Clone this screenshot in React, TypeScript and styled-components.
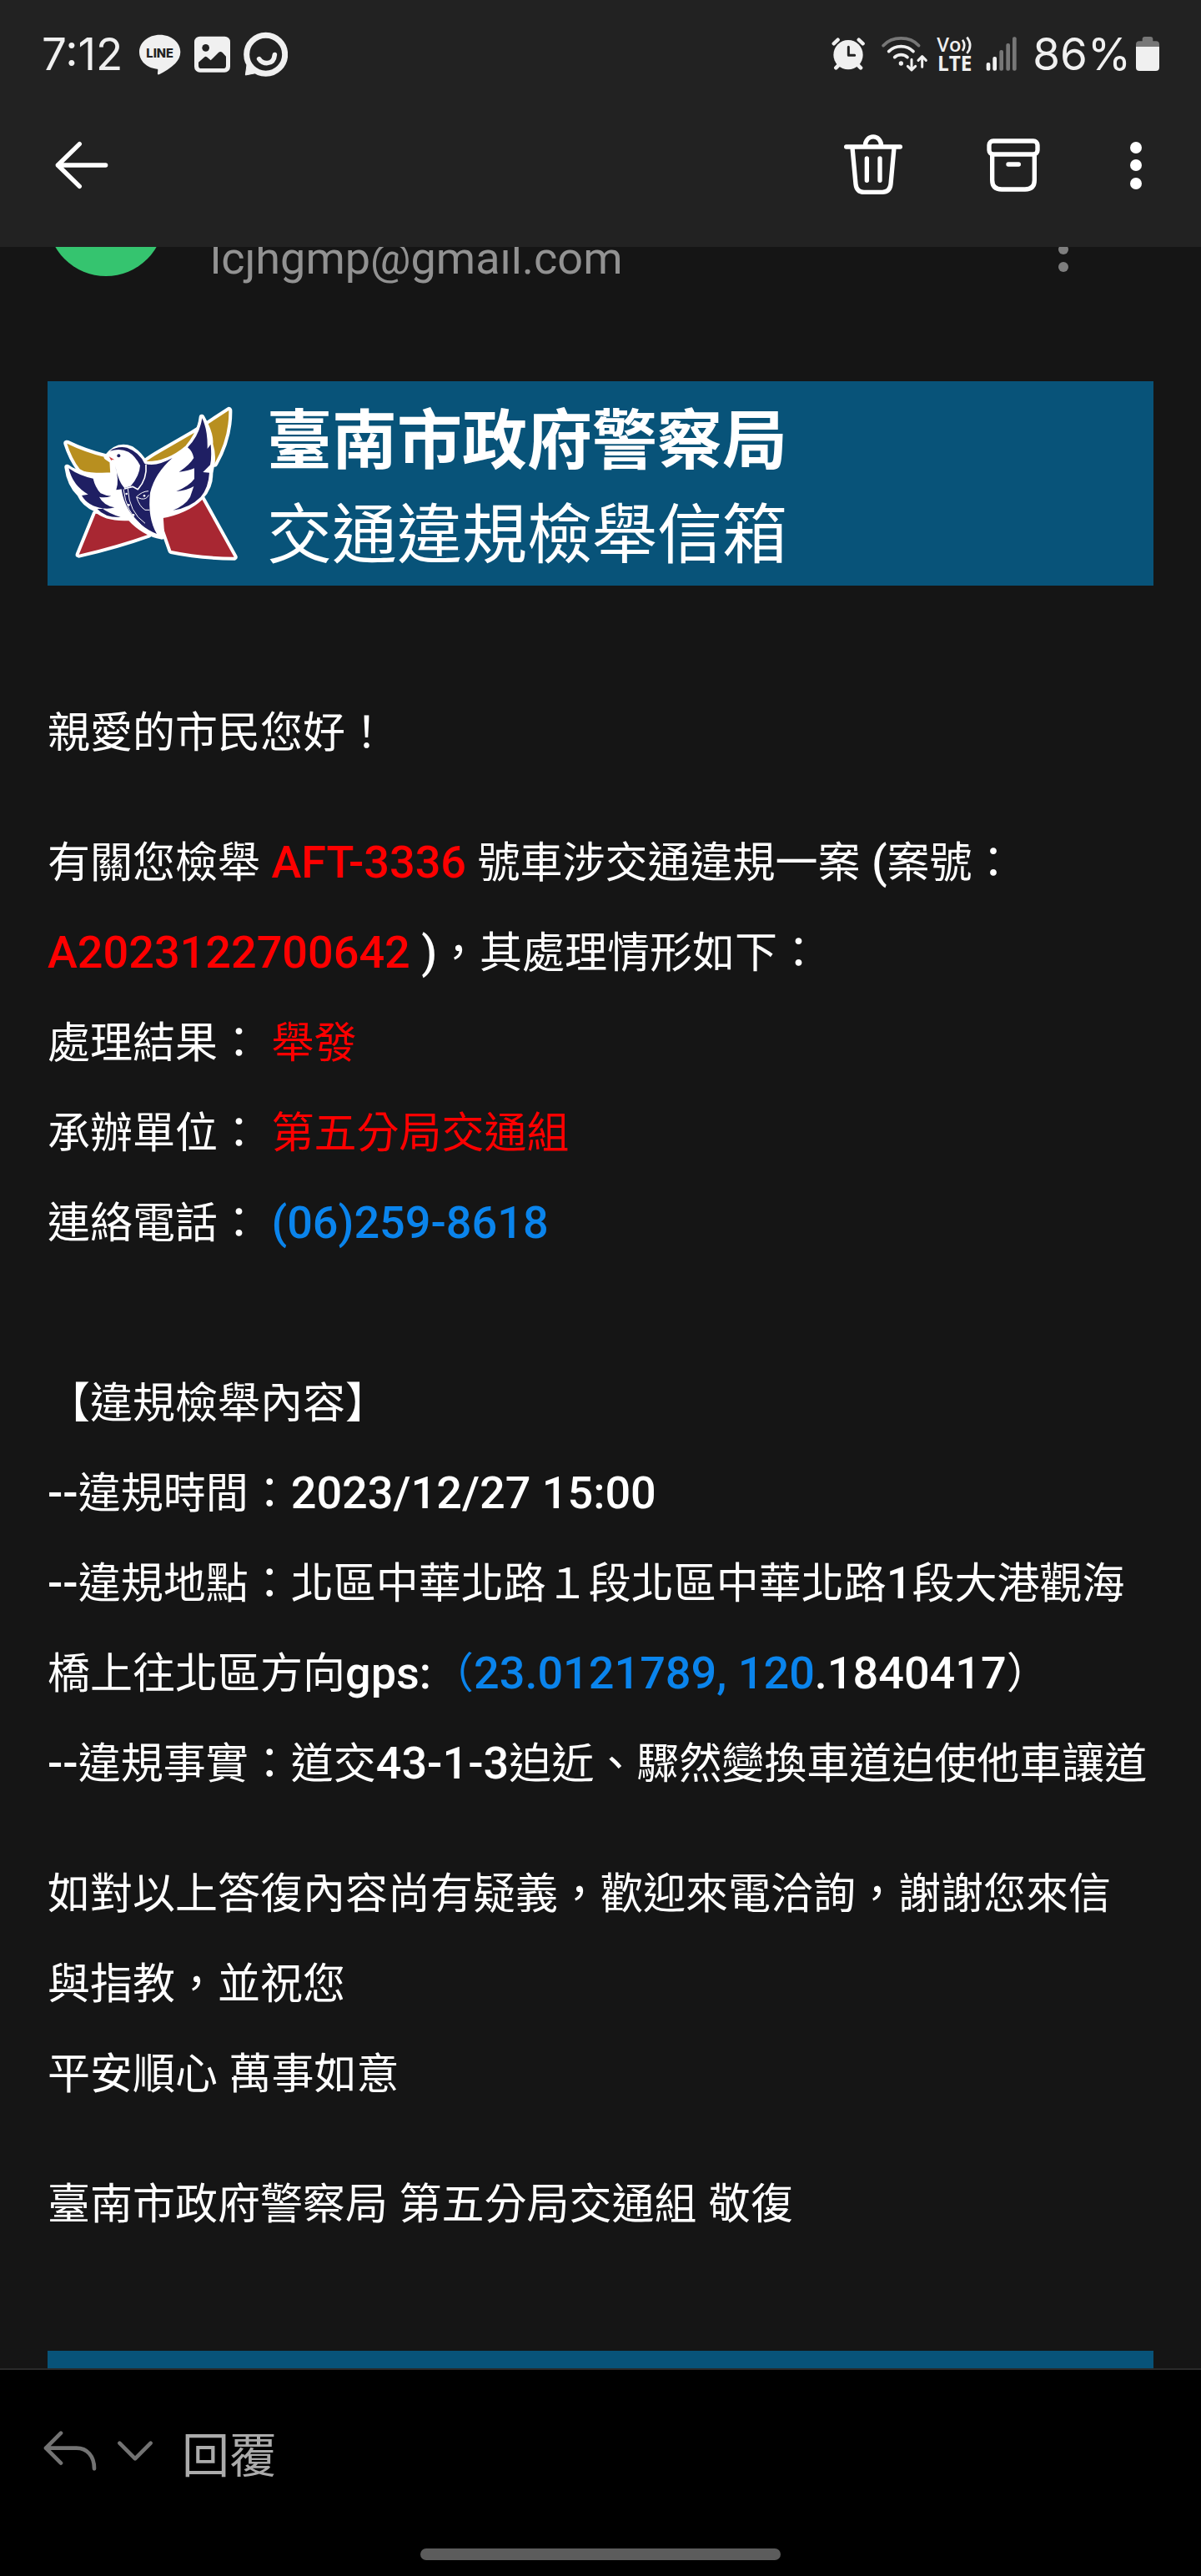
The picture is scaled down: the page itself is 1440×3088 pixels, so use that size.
import React from 'react';
import styled, { createGlobalStyle } from 'styled-components';

const GlobalStyle = createGlobalStyle`
    * {
        box-sizing: border-box;
    }

    body {
        margin: 0;
        background: #000;
        font-family: Roboto, 'Noto Sans CJK TC', sans-serif;
    }
`;

const Screen = styled.div`
    display: flex;
    flex-direction: column;
    height: 100vh;
    background: #151515;
    color: #fff;
`;

const Header = styled.header`
    flex: none;
    padding-bottom: 30px;
    background: #222;
`;

const StatusBar = styled.div`
    display: flex;
    align-items: center;
    justify-content: space-between;
    height: 130px;
    padding: 0 50px;
    color: #f0f0f0;
    font-family: Inter, sans-serif;
    font-size: 53px;
    line-height: 64px;
`;

const StatusGroup = styled.div<{ $gap: number }>`
    display: flex;
    align-items: center;
    gap: ${({ $gap }) => $gap}px;
`;

const Clock = styled.time`
    margin-right: 4px;
`;

const Battery = styled.div`
    display: flex;
    align-items: center;
    gap: 6px;
    margin-left: 8px;
`;

const Toolbar = styled.nav`
    display: flex;
    align-items: center;
    gap: 96px;
    height: 136px;
    padding: 0 63px 0 65px;
`;

const IconButton = styled.button<{ $pushRight?: boolean; $color?: string }>`
    display: flex;
    margin: 0;
    margin-right: ${({ $pushRight }) => ($pushRight ? 'auto' : '0')};
    padding: 0;
    border: 0;
    background: none;
    color: ${({ $color }) => $color || '#fff'};
`;

const Message = styled.main`
    flex: 1;
    min-height: 0;
    padding: 0 57px;
    overflow: hidden;
`;

/* the message is scrolled, so the sender is partly under the toolbar */
const Sender = styled.div`
    display: flex;
    align-items: flex-end;
    height: 151px;
    margin-top: -105px;
`;

const Avatar = styled.div`
    align-self: flex-start;
    width: 140px;
    height: 140px;
    margin-right: 55px;
    border-radius: 50%;
    background: #35c46f;
`;

const Address = styled.span`
    flex: 1;
    color: #929292;
    font-size: 54px;
    line-height: 64px;
`;

const SenderMenu = styled(IconButton)`
    margin-right: 96px;
`;

const Banner = styled.div`
    display: flex;
    align-items: center;
    gap: 32px;
    min-height: 245px;
    margin-top: 115px;
    padding: 0 17px;
    background: #085379;
`;

const BannerText = styled.div`
    padding-top: 12px;
    font-size: 78px;
    line-height: 113px;
`;

const BannerTitle = styled.h1`
    margin: 0;
    font-size: 78px;
    font-weight: 700;
    line-height: 113px;
`;

const Body = styled.article`
    margin-top: 123px;
    font-size: 51px;
    line-height: 108px;
`;

const Paragraph = styled.p`
    margin: 0 0 48px;
`;

const Latin = styled.span`
    font-size: 54px;
    font-weight: 500;
    line-height: 54px;
`;

const Marked = styled.span`
    color: #fe0000;
`;

const Code = styled(Latin)`
    color: #fe0000;
`;

const Link = styled.a`
    color: #0a84ec;
    text-decoration: none;
`;

const FooterBanner = styled(Banner)`
    margin-top: 121px;
`;

const Footer = styled.footer`
    display: flex;
    flex: none;
    flex-direction: column;
    align-items: center;
    border-top: 2px solid #2a2a2a;
    background: #000;
`;

const ReplyBar = styled.div`
    display: flex;
    align-items: center;
    align-self: stretch;
    gap: 24px;
    padding: 58px 52px 0;
`;

const ReplyButton = styled.button`
    margin: 0 0 0 10px;
    padding: 0 0 4px;
    border: 0;
    background: none;
    color: #ababab;
    font-family: 'Noto Sans CJK TC', sans-serif;
    font-size: 57px;
    line-height: 80px;
`;

const HomeHandle = styled.div`
    width: 30%;
    height: 14px;
    margin: 72px 0 19px;
    border-radius: 7px;
    background: #5c5c5c;
`;

const LineIcon = () => (
    <svg width="50" height="56" viewBox="504 111 150 168" aria-label="LINE">
        <path
            d="M578 125c41 0 74 27 74 62 0 16-7 30-19 42-16 16-38 30-56 38-6 3-8 0-7-5l1-10c0-3-1-4-4-4-36-3-63-29-63-61 0-35 33-62 74-62z"
            fill="currentColor"
        />
        <text x="578" y="206" fill="#222" fontSize="44" fontWeight="800" textAnchor="middle" fontFamily="Inter, sans-serif">
            LINE
        </text>
    </svg>
);

const PictureIcon = () => (
    <svg width="43" height="56" viewBox="702 111 129 168">
        <rect x="702" y="131" width="129" height="129" rx="20" fill="currentColor" />
        <circle cx="743" cy="172" r="13" fill="#222" />
        <path d="M717 224l22-19q4-3 8 0l14 12 28-28q7-6 14 0l13 14v33q0 10-10 10h-79q-10 0-10-10z" fill="#222" />
    </svg>
);

const ChatIcon = () => (
    <svg width="53" height="56" viewBox="876 111 159 168" fill="none" stroke="currentColor">
        <circle cx="956" cy="196" r="69" strokeWidth="21" />
        <path d="M888 234l-5 36 36-7z" fill="currentColor" strokeWidth="3" strokeLinejoin="round" />
        <path d="M932 212c10 18 52 26 56-15" strokeWidth="17" strokeLinecap="round" />
    </svg>
);

const AlarmIcon = () => (
    <svg width="49" height="56" viewBox="112 111 147 168" fill="none" stroke="currentColor" strokeLinecap="round">
        <circle cx="172" cy="197" r="53" fill="currentColor" stroke="none" />
        <path d="M120 157l15-14M225 157l-15-14" strokeWidth="13" />
        <path d="M136 236l-8 8M209 236l8 8" strokeWidth="14" />
        <path d="M173 169v30h22" stroke="#222" strokeWidth="9" strokeLinejoin="round" />
    </svg>
);

const WifiIcon = () => (
    <svg width="57" height="56" viewBox="287 111 171 168" fill="none" stroke="currentColor" strokeWidth="11" strokeLinecap="round">
        <path d="M296 164c32-35 96-35 128 0" stroke="#777" />
        <path d="M316 185c24-24 64-24 88 0M337 206c12-12 34-12 46 0" />
        <circle cx="360" cy="228" r="8" fill="currentColor" stroke="none" />
        <path d="M398 214v36M384 238l14 14 14-14M436 241v-36M422 217l14-14 14 14" strokeWidth="9" strokeLinejoin="round" />
    </svg>
);

const VolteIcon = () => (
    <svg width="49" height="56" viewBox="488 111 147 168" fill="currentColor" fontFamily="'Open Sans', sans-serif" fontWeight="700">
        <text x="489" y="186" fontSize="71" fontWeight="600">
            Vo
        </text>
        <text x="491" y="256" fontSize="73">
            LTE
        </text>
        <path d="M581 143q14 20 0 40M597 134q23 30 0 58" fill="none" stroke="currentColor" strokeWidth="8" />
    </svg>
);

const SignalIcon = () => (
    <svg width="38" height="56" viewBox="667 111 114 168" fill="#777">
        <rect x="669" y="225" width="14" height="29" rx="6" fill="currentColor" />
        <rect x="692" y="204" width="14" height="50" rx="6" fill="currentColor" />
        <rect x="716" y="180" width="14" height="74" rx="6" />
        <rect x="740" y="156" width="14" height="98" rx="6" />
        <rect x="763" y="133" width="14" height="121" rx="6" />
    </svg>
);

const BatteryIcon = () => (
    <svg width="28" height="56" viewBox="1206 111 84 168">
        <path d="M1206 168v-8q0-12 12-12h11v-7q0-9 9-9h20q9 0 9 9v7h11q12 0 12 12v8z" fill="#777" />
        <path d="M1206 168h84v74q0 13-13 13h-58q-13 0-13-13z" fill="currentColor" />
    </svg>
);

const BackIcon = () => (
    <svg width="66" height="60" viewBox="195 504 198 180" fill="none" stroke="currentColor" strokeWidth="16" strokeLinecap="round" strokeLinejoin="round">
        <path d="M380 594H208M286 518l-78 76 78 76" />
    </svg>
);

const TrashIcon = () => (
    <svg width="72" height="76" viewBox="153 480 216 228" fill="none" stroke="currentColor" strokeWidth="16" strokeLinecap="round">
        <path d="M164 528h194M232 526c0-46 58-46 58 0" />
        <path d="M186 532l12 130c2 18 12 29 30 29h66c18 0 28-11 30-29l12-130M238 570v79M285 570v79" />
    </svg>
);

const ArchiveIcon = () => (
    <svg width="72" height="76" viewBox="657 480 216 228" fill="none" stroke="currentColor" strokeWidth="16" strokeLinecap="round">
        <rect x="678" y="507" width="174" height="48" rx="15" />
        <path d="M689 558v90c0 22 12 33 34 33h84c22 0 34-11 34-33v-90M747 591h37" />
    </svg>
);

const MoreIcon = () => (
    <svg width="30" height="76" viewBox="0 0 30 76" fill="currentColor">
        <circle cx="15" cy="17" r="7" />
        <circle cx="15" cy="38" r="7" />
        <circle cx="15" cy="60" r="7" />
    </svg>
);

const SenderMoreIcon = () => (
    <svg width="24" height="86" viewBox="0 0 24 86" fill="currentColor">
        <circle cx="12" cy="22" r="6" />
        <circle cx="12" cy="43" r="6" />
        <circle cx="12" cy="64" r="6" />
    </svg>
);

const ReplyIcon = () => (
    <svg width="64" height="60" viewBox="156 400 192 180" fill="none" stroke="currentColor" strokeWidth="14" strokeLinecap="round" strokeLinejoin="round">
        <path d="M219 417l-54 54 54 54M165 471h110c38 0 64 28 64 74" />
    </svg>
);

const ChevronIcon = () => (
    <svg width="44" height="60" viewBox="417 400 132 180" fill="none" stroke="currentColor" strokeWidth="14" strokeLinecap="round" strokeLinejoin="round">
        <path d="M427 453l56 56 56-56" />
    </svg>
);

const PoliceLogo = () => (
    <svg width="214" height="188" viewBox="100 136 642 564" strokeLinejoin="round">
        <g stroke="#fff" strokeWidth="24" paintOrder="stroke">
            <path d="M222 525L162 672Q300 640 412 600L340 540z" fill="#a82732" />
            <path d="M453 541Q550 520 605 474L720 681Q600 680 494 658z" fill="#a82732" />
            <path d="M119 273Q180 303 255 322Q292 345 287 381Q215 397 165 365Q135 325 119 273z" fill="#b88f1f" />
            <path d="M400 341Q420 325 455 305L572 237L628 202L701 154Q703 250 650 345L560 290Q480 345 400 341z" fill="#b88f1f" />
        </g>
        <path
            d="M120 358Q165 395 285 387L282 335L262 322Q300 272 350 292Q385 315 400 347Q480 350 553 288Q598 235 604 178Q638 240 634 275Q648 320 638 358L634 380Q635 430 600 466Q550 515 455 533L460 608Q395 595 345 540Q260 545 225 510Q180 490 165 455Q128 420 120 358z"
            fill="#fff"
            stroke="#fff"
            strokeWidth="20"
        />
        <g fill="#1f1f63">
            <path d="M605 182Q626 225 624 292L636 276Q640 325 634 350L608 376L631 378Q628 432 600 465Q560 505 500 513Q545 495 562 465L575 427Q550 442 512 445Q560 425 577 400V362Q555 372 522 375Q560 350 575 325Q570 300 553 287Q595 245 605 182z" />
            <path d="M125 362Q165 390 213 399Q220 430 240 452Q260 462 278 462Q255 470 235 465Q250 495 290 503Q270 510 245 506Q270 525 312 538Q255 540 228 508Q255 508 250 506Q195 500 172 460L195 456Q140 425 125 362z" />
            <path d="M273 300Q300 281 335 288Q380 305 398 345Q440 358 498 325Q435 380 418 450Q408 540 442 598Q375 570 340 510Q320 475 315 437L348 426Q380 390 382 352Q365 318 340 303Q310 288 273 300z" />
            <path d="M292 352Q305 415 328 435L296 440Q308 405 292 352z" />
            <circle cx="305" cy="317" r="6" />
        </g>
        <path d="M270 320l20 12q-8-2-12 2z" fill="#d04040" />
        <g fill="none" stroke="#fff" strokeWidth="3">
            <path d="M403 348Q408 400 374 438L355 428L325 436" strokeWidth="5" />
            <path d="M338 436Q342 520 400 560M322 437Q332 520 385 565" />
            <path d="M368 466Q388 445 412 444M368 466L387 472Q405 475 413 458M370 468Q380 500 400 512H416" />
        </g>
        <g fill="#fff">
            <circle cx="333" cy="454" r="4" />
            <circle cx="341" cy="494" r="4" />
            <circle cx="358" cy="530" r="4" />
            <circle cx="397" cy="461" r="4" />
        </g>
    </svg>
);

const App: React.FC = () => (
    <Screen lang="zh-Hant">
        <GlobalStyle />
        <Header>
            <StatusBar>
                <StatusGroup $gap={16}>
                    <Clock>7:12</Clock>
                    <LineIcon />
                    <PictureIcon />
                    <ChatIcon />
                </StatusGroup>
                <StatusGroup $gap={10}>
                    <AlarmIcon />
                    <WifiIcon />
                    <VolteIcon />
                    <SignalIcon />
                    <Battery>
                        <span>86%</span>
                        <BatteryIcon />
                    </Battery>
                </StatusGroup>
            </StatusBar>
            <Toolbar>
                <IconButton $pushRight aria-label="返回">
                    <BackIcon />
                </IconButton>
                <IconButton aria-label="刪除">
                    <TrashIcon />
                </IconButton>
                <IconButton aria-label="封存">
                    <ArchiveIcon />
                </IconButton>
                <IconButton aria-label="更多">
                    <MoreIcon />
                </IconButton>
            </Toolbar>
        </Header>
        <Message>
            <Sender>
                <Avatar />
                <Address>lcjhgmp@gmail.com</Address>
                <SenderMenu $color="#7e7e7e" aria-label="郵件選項">
                    <SenderMoreIcon />
                </SenderMenu>
            </Sender>
            <Banner>
                <PoliceLogo />
                <BannerText>
                    <BannerTitle>臺南市政府警察局</BannerTitle>
                    交通違規檢舉信箱
                </BannerText>
            </Banner>
            <Body>
                <Paragraph>親愛的市民您好！</Paragraph>
                <Paragraph>
                    有關您檢舉<Code> AFT-3336 </Code>號車涉交通違規一案<Latin> (</Latin>案號：
                    <br />
                    <Code>A2023122700642</Code>
                    <Latin> )</Latin>，其處理情形如下：
                    <br />
                    處理結果：<Latin> </Latin>
                    <Marked>舉發</Marked>
                    <br />
                    承辦單位：<Latin> </Latin>
                    <Marked>第五分局交通組</Marked>
                    <br />
                    連絡電話：
                    <Latin>
                        {' '}
                        <Link href="tel:062598618">(06)259-8618</Link>
                    </Latin>
                    <br />
                    <br />
                    【違規檢舉內容】
                    <br />
                    <Latin>--</Latin>違規時間：<Latin>2023/12/27 15:00</Latin>
                    <br />
                    <Latin>--</Latin>違規地點：北區中華北路１段北區中華北路<Latin>1</Latin>段大港觀海
                    <br />
                    橋上往北區方向<Latin>gps:</Latin>
                    <Link href="geo:23.0121789,120">
                        （<Latin>23.0121789, 120</Latin>
                    </Link>
                    <Latin>.1840417</Latin>）
                    <br />
                    <Latin>--</Latin>違規事實：道交<Latin>43-1-3</Latin>迫近、驟然變換車道迫使他車讓道
                </Paragraph>
                <Paragraph>
                    如對以上答復內容尚有疑義，歡迎來電洽詢，謝謝您來信
                    <br />
                    與指教，並祝您
                    <br />
                    平安順心<Latin> </Latin>萬事如意
                </Paragraph>
                <Paragraph>
                    臺南市政府警察局<Latin> </Latin>第五分局交通組<Latin> </Latin>敬復
                </Paragraph>
            </Body>
            <FooterBanner />
        </Message>
        <Footer>
            <ReplyBar>
                <IconButton $color="#737373" aria-label="回覆郵件">
                    <ReplyIcon />
                </IconButton>
                <IconButton $color="#737373" aria-label="回覆選項">
                    <ChevronIcon />
                </IconButton>
                <ReplyButton>回覆</ReplyButton>
            </ReplyBar>
            <HomeHandle />
        </Footer>
    </Screen>
);

export default App;
